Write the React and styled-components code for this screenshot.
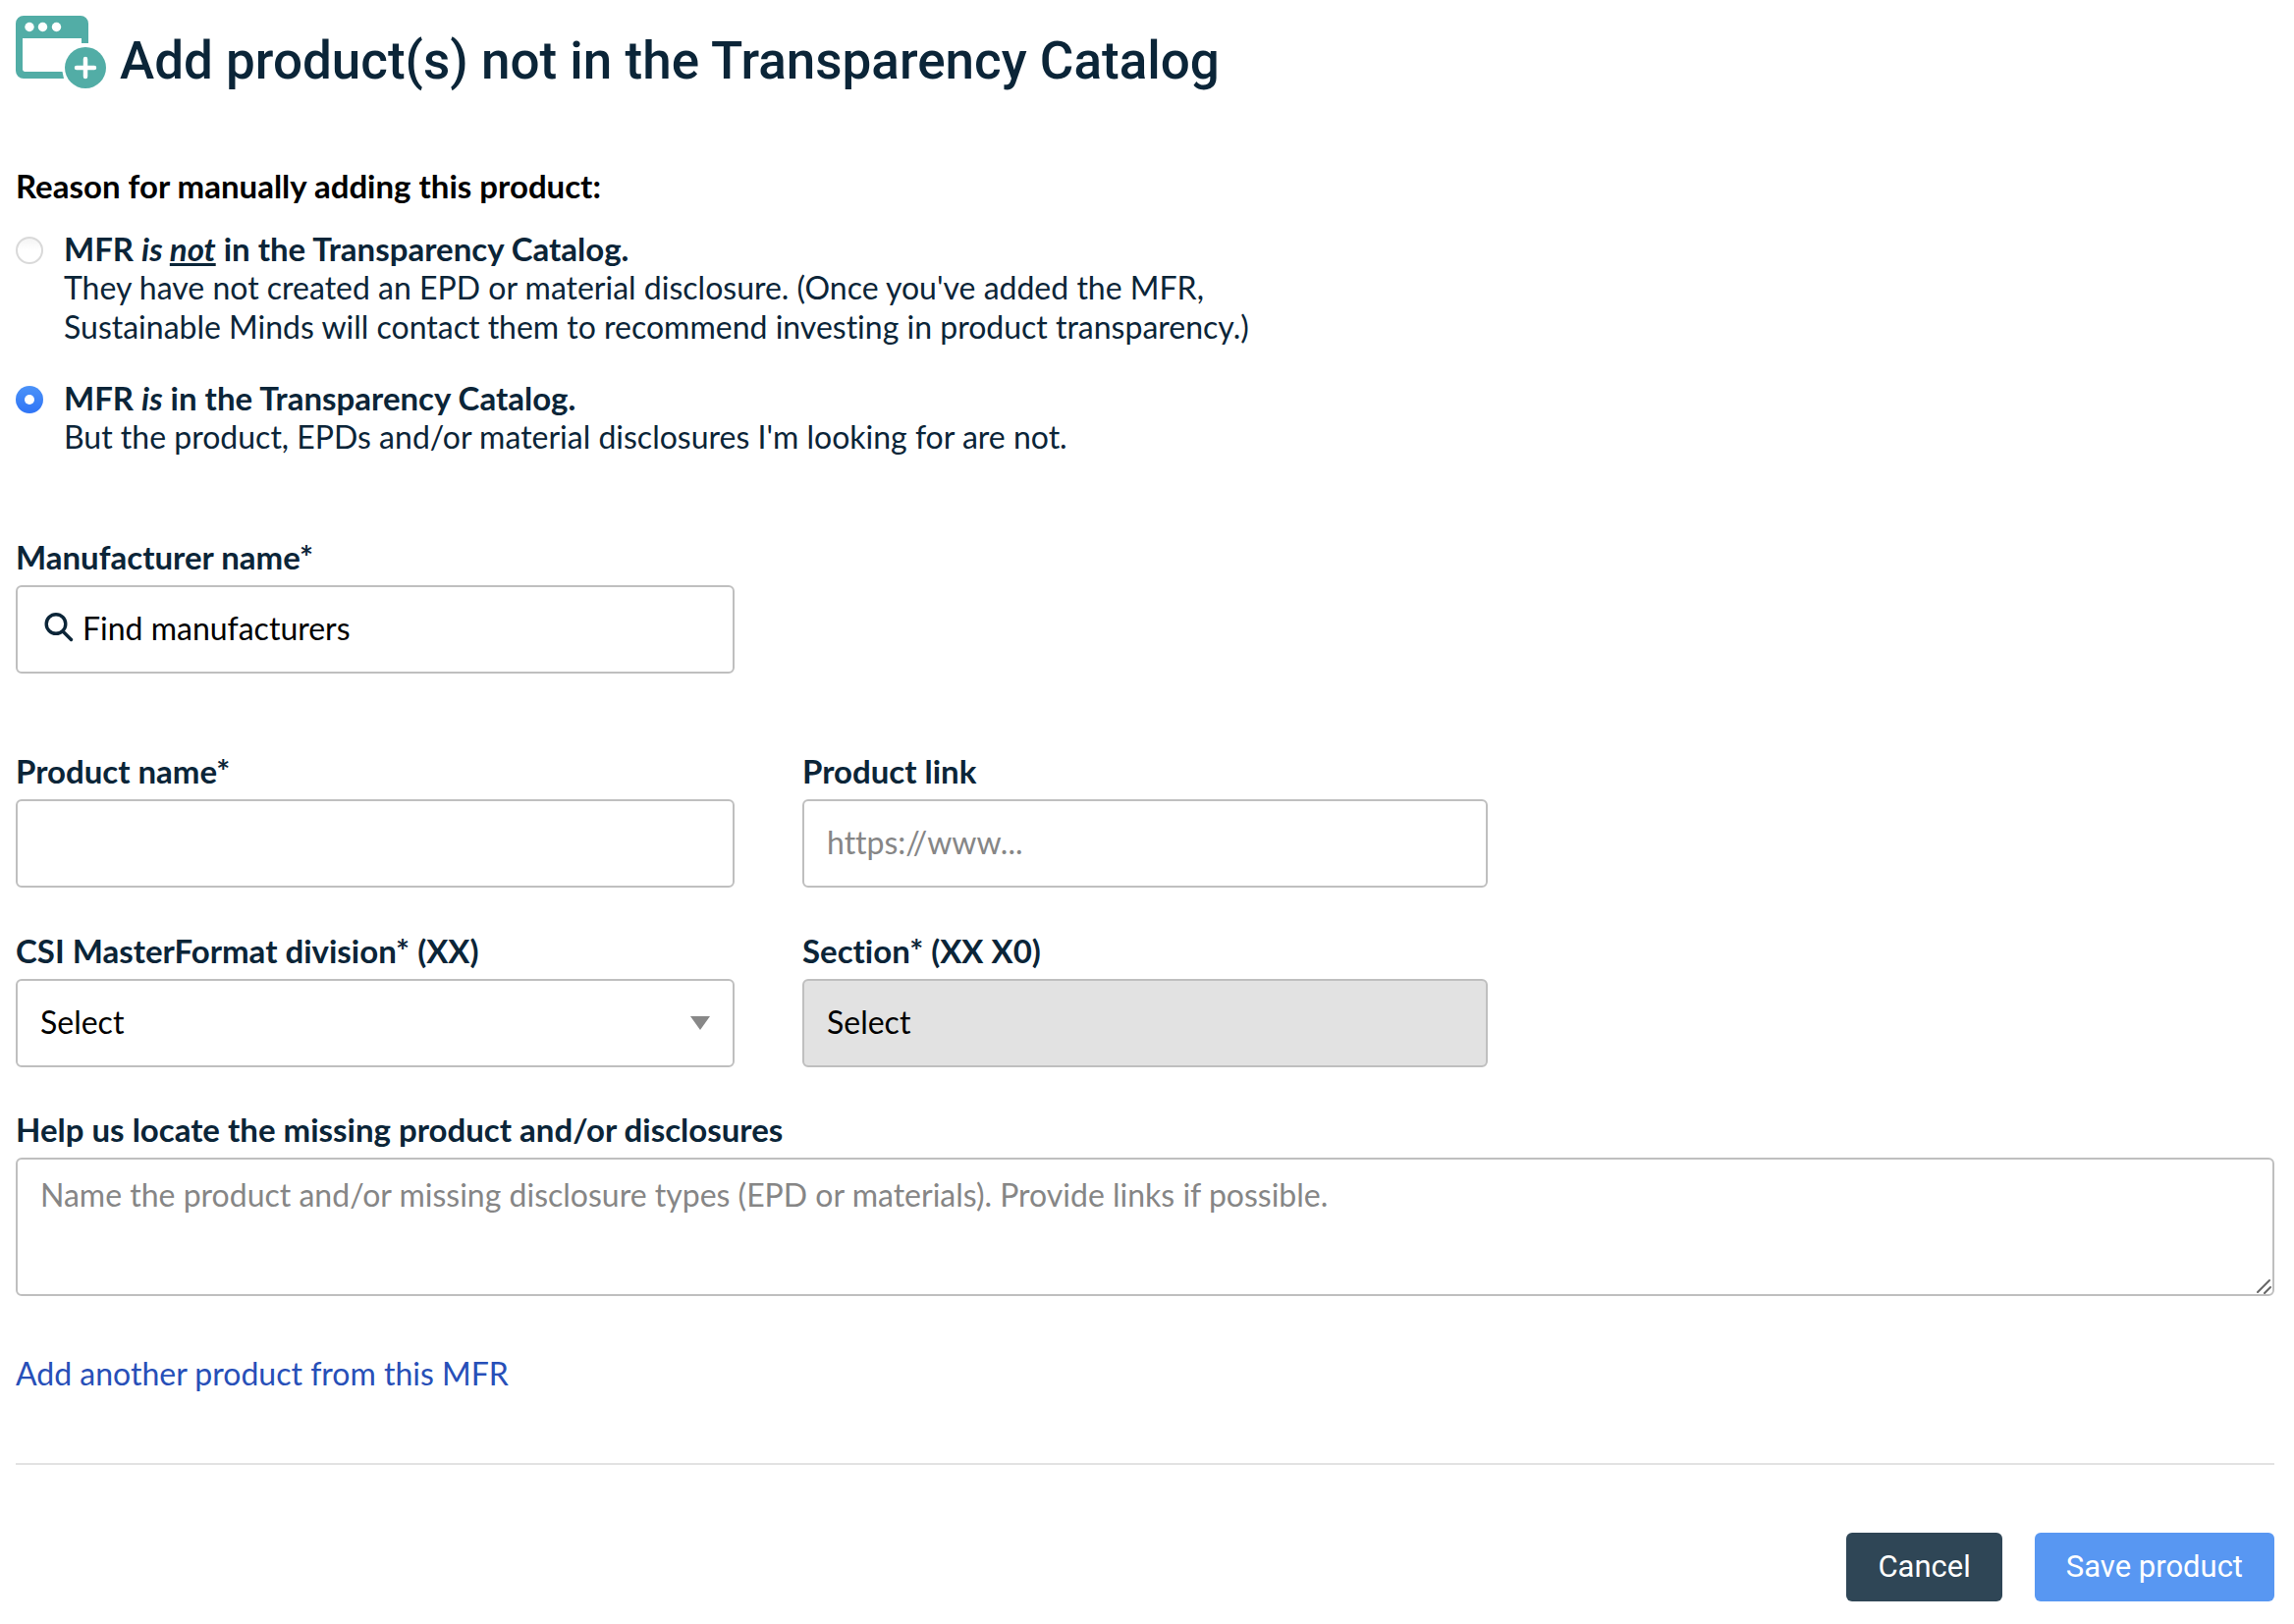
import React, { useState } from 'react';
import styled, { createGlobalStyle, css } from 'styled-components';

const GlobalStyle = createGlobalStyle`
  *, *::before, *::after {
    box-sizing: border-box;
  }
  body {
    margin: 0;
    background: #fff;
    color: #0b2538;
    font-family: Lato, "Open Sans", sans-serif;
    font-size: 32px;
    font-variant-ligatures: none;
    line-height: 40px;
  }
`;

const Page = styled.main`
  padding: 16px 20px 22px 16px;
`;

const Header = styled.header`
  display: flex;
  align-items: flex-start;
  gap: 14px;
  margin-bottom: 77px;
  svg {
    flex: none;
    width: 92px;
    height: 74px;
  }
  h1 {
    margin: 16px 0 0;
    font-family: Roboto, sans-serif;
    font-size: 53px;
    font-weight: 500;
    line-height: 60px;
  }
`;

const Reasons = styled.fieldset`
  display: flex;
  flex-direction: column;
  gap: 32px;
  margin: 0 0 82px;
  padding: 0;
  border: 0;
  legend {
    margin-bottom: 24px;
    padding: 0;
    color: #000;
    font-size: 33px;
    font-weight: 700;
  }
`;

const Reason = styled.label`
  display: flex;
  align-items: flex-start;
  gap: 21px;
  max-width: 1400px;
  cursor: pointer;
  p {
    margin: 0;
  }
  strong {
    display: block;
    font-size: 33px;
  }
`;

const Radio = styled.input`
  appearance: none;
  flex: none;
  display: grid;
  place-items: center;
  width: 28px;
  height: 28px;
  margin: 8px 0 0;
  border: 2px solid #d9d9d9;
  border-radius: 50%;
  background: linear-gradient(#f4f4f4, #fff 50%);
  &:checked {
    border: 0;
    background: linear-gradient(#4b92f8, #2f74f6);
  }
  &:checked::before {
    content: '';
    width: 10px;
    height: 10px;
    border-radius: 50%;
    background: #fff;
  }
`;

const FieldGrid = styled.div`
  display: grid;
  grid-template-columns: 732fr 698fr;
  gap: 44px 69px;
  max-width: 1499px;
  margin-bottom: ${props => props.$space}px;
`;

const Field = styled.div`
  display: flex;
  flex-direction: column;
  gap: 9px;
  label {
    font-size: 33px;
    font-weight: 700;
  }
`;

// control and its icon share one grid cell
const Control = styled.div`
  display: grid;
  align-items: center;
  > * {
    grid-area: 1 / 1;
  }
  svg {
    z-index: 1;
    pointer-events: none;
  }
  .search {
    margin-left: 28px;
  }
  .arrow {
    justify-self: end;
    margin-right: 25px;
  }
  .grip {
    place-self: end;
    margin: 2px;
  }
`;

const box = css`
  width: 100%;
  margin: 0;
  padding: 0 23px 3px;
  border: 2px solid #bfbfbf;
  border-radius: 6px;
  background: #fff;
  color: #000;
  font: inherit;
  outline: none;
  &::placeholder {
    color: #868686;
    opacity: 1;
  }
  &:focus-visible {
    border-color: #5897f2;
  }
`;

const Input = styled.input`
  ${box}
  height: 90px;
`;

const SearchInput = styled(Input)`
  padding-left: 66px;
  &::placeholder {
    color: #000;
  }
`;

const Select = styled.select`
  ${box}
  appearance: none;
  height: 90px;
  &:disabled {
    background: #e2e2e2;
    opacity: 1;
  }
`;

const TextArea = styled.textarea`
  ${box}
  display: block;
  height: 141px;
  padding-top: 16px;
  resize: vertical;
  &::-webkit-resizer {
    background: transparent;
  }
`;

const AddLink = styled.a`
  display: inline-block;
  margin: 59px 0 71px;
  color: #274fb8;
  text-decoration: none;
  &:hover {
    text-decoration: underline;
  }
`;

const Footer = styled.footer`
  display: flex;
  justify-content: flex-end;
  gap: 33px;
  padding-top: 69px;
  border-top: 2px solid #e2e2e2;
`;

const Button = styled.button`
  height: 70px;
  padding: 0 32px;
  border: 0;
  border-radius: 6px;
  background: ${props => (props.$primary ? '#5897f2' : '#2f4656')};
  color: #fff;
  font-family: Roboto, sans-serif;
  font-size: 31px;
  line-height: 40px;
  cursor: pointer;
`;

const WindowPlusIcon = () => (
  <svg viewBox="0 0 92 74" aria-hidden="true">
    <path
      fill="#52ada6"
      fillRule="evenodd"
      d="M8 0H66a8 8 0 0 1 8 8V28H67V23H7V55a2.500 2.500 0 0 0 2 2H47.500L49 64H8a8 8 0 0 1-8-8V8a8 8 0 0 1 8-8Z"
    />
    <circle cx="14" cy="11.500" r="4.700" fill="#fff" />
    <circle cx="27.500" cy="11.500" r="4.700" fill="#fff" />
    <circle cx="41.500" cy="11.500" r="4.700" fill="#fff" />
    <circle cx="71" cy="53" r="21" fill="#52ada6" />
    <path d="M71 44V62M62 53H80" stroke="#fff" strokeWidth="4.500" strokeLinecap="round" />
  </svg>
);

const SearchIcon = () => (
  <svg className="search" width="32" height="34" viewBox="0 0 32 34" fill="none" aria-hidden="true">
    <circle cx="13" cy="11.500" r="9.800" stroke="#0b2538" strokeWidth="3.400" />
    <path d="M20 19L28.500 27.500" stroke="#0b2538" strokeWidth="3.400" strokeLinecap="round" />
  </svg>
);

function App() {
  const [reason, setReason] = useState('in');
  const pick = e => setReason(e.target.value);

  return (
    <>
      <GlobalStyle />
      <Page>
        <Header>
          <WindowPlusIcon />
          <h1>Add product(s) not in the Transparency Catalog</h1>
        </Header>
        <form onSubmit={e => e.preventDefault()}>
          <Reasons>
            <legend>Reason for manually adding this product:</legend>
            <Reason>
              <Radio type="radio" name="reason" value="out" checked={reason === 'out'} onChange={pick} />
              <p>
                <strong>MFR <em>is <u>not</u></em> in the Transparency Catalog.</strong>
                They have not created an EPD or material disclosure. (Once you've added the MFR,
                <br />
                Sustainable Minds will contact them to recommend investing in product transparency.)
              </p>
            </Reason>
            <Reason>
              <Radio type="radio" name="reason" value="in" checked={reason === 'in'} onChange={pick} />
              <p>
                <strong>MFR <em>is</em> in the Transparency Catalog.</strong>
                But the product, EPDs and/or material disclosures I'm looking for are not.
              </p>
            </Reason>
          </Reasons>

          <FieldGrid $space={79}>
            <Field>
              <label htmlFor="manufacturer">Manufacturer name*</label>
              <Control>
                <SearchIcon />
                <SearchInput id="manufacturer" type="text" placeholder="Find manufacturers" />
              </Control>
            </Field>
          </FieldGrid>

          <FieldGrid $space={43}>
            <Field>
              <label htmlFor="product">Product name*</label>
              <Input id="product" type="text" />
            </Field>
            <Field>
              <label htmlFor="link">Product link</label>
              <Input id="link" type="text" placeholder="https://www..." />
            </Field>
            <Field>
              <label htmlFor="division">CSI MasterFormat division* (XX)</label>
              <Control>
                <Select id="division">
                  <option>Select</option>
                </Select>
                <svg className="arrow" width="20" height="14" viewBox="0 0 20 14" aria-hidden="true">
                  <path d="M0 0H20L10 14Z" fill="#888" />
                </svg>
              </Control>
            </Field>
            <Field>
              <label htmlFor="section">Section* (XX X0)</label>
              <Select id="section" disabled>
                <option>Select</option>
              </Select>
            </Field>
          </FieldGrid>

          <Field>
            <label htmlFor="details">Help us locate the missing product and/or disclosures</label>
            <Control>
              <TextArea
                id="details"
                placeholder="Name the product and/or missing disclosure types (EPD or materials). Provide links if possible."
              />
              <svg className="grip" width="16" height="16" viewBox="0 0 16 16" aria-hidden="true">
                <path d="M1 14L13 2M8 15L14 9" stroke="#666" strokeWidth="2" strokeLinecap="round" />
              </svg>
            </Control>
          </Field>

          <AddLink href="#add">Add another product from this MFR</AddLink>

          <Footer>
            <Button type="button">Cancel</Button>
            <Button type="submit" $primary>Save product</Button>
          </Footer>
        </form>
      </Page>
    </>
  );
}

export default App;
